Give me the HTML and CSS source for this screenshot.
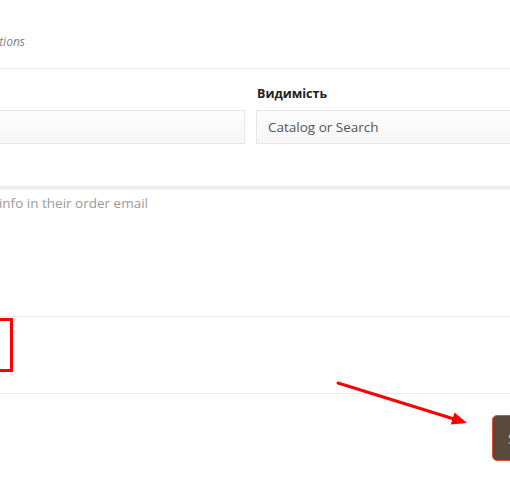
FILE: index.html
```html
<!DOCTYPE html>
<html lang="uk">
<head>
<meta charset="utf-8">
<title>Shipping method</title>
<link rel="stylesheet" href="styles.css">
</head>
<body>
<div class="page">
  <div class="head">
    <p class="note">Special instructions</p>
  </div>
  <div class="fields">
    <div class="field">
      <label class="label">Назва</label>
      <div class="input"></div>
    </div>
    <div class="field">
      <label class="label">Видимість</label>
      <div class="input">Catalog or Search</div>
    </div>
  </div>
  <div class="textarea">
    <p class="placeholder">Customers will see this info in their order email</p>
  </div>
  <div class="section">
    <div class="highlight"></div>
  </div>
  <div class="actions">
    <button class="btn">Save</button>
  </div>
</div>
<svg class="arrow" width="510" height="501" viewBox="0 0 510 501">
  <line x1="338" y1="383" x2="454" y2="419" stroke="#ff0000" stroke-width="3" stroke-linecap="round"/>
  <polygon points="467,423 454.5,412.6 450.8,424.6" fill="#ff0000"/>
</svg>
</body>
</html>
```

FILE: styles.css
```css
html, body {
  margin: 0;
  padding: 0;
  overflow: hidden;
  background: #fff;
}
body {
  font-family: "Open Sans", "Noto Sans", sans-serif;
  width: 510px;
  height: 501px;
  position: relative;
}
.page {
  margin-left: -300px;
  width: 910px;
}
.head {
  border-bottom: 1px solid #e8e8e8;
  box-sizing: border-box;
  height: 69px;
}
.note {
  margin: 0;
  padding-top: 33px;
  width: 325px;
  text-align: right;
  font-style: italic;
  font-size: 12px;
  line-height: 17px;
  color: #7d818c;
}
.fields {
  display: grid;
  grid-template-columns: 545px 1fr;
  column-gap: 11px;
  padding-top: 16px;
  height: 101px;
}
.field {
  display: flex;
  flex-direction: column;
}
.label {
  font-weight: 700;
  font-size: 12.5px;
  line-height: 18px;
  color: #222;
  margin-bottom: 7px;
  padding-left: 1px;
}
.input {
  height: 34px;
  box-sizing: border-box;
  border: 1px solid #e6e6e6;
  background: linear-gradient(#fcfcfc, #f6f6f6);
  font-size: 13.5px;
  line-height: 32px;
  padding-left: 11px;
  color: #555;
}
.textarea {
  border-top: 3px solid #ececec;
  box-shadow: inset 0 1px 2px #f2f2f2;
  border-bottom: 1px solid #ebebeb;
  padding-top: 4px;
  box-sizing: border-box;
  height: 131px;
}
.placeholder {
  margin: 0;
  width: 448px;
  text-align: right;
  font-size: 13.5px;
  line-height: 20px;
  color: #9a9a9a;
}
.section {
  height: 77px;
  box-sizing: border-box;
  border-bottom: 1px solid #ebebeb;
  padding-top: 1px;
}
.highlight {
  width: 313px;
  height: 54px;
  box-sizing: border-box;
  border: 3px solid #ff0000;
}
.actions {
  display: flex;
  justify-content: flex-end;
  padding-top: 21px;
}
.btn {
  width: 118px;
  height: 46px;
  box-sizing: border-box;
  border: 1px solid #e0512b;
  border-radius: 5px;
  background: #594a3b;
  color: #9ccbf2;
  font-family: "Open Sans", sans-serif;
  font-size: 14px;
  text-align: left;
  padding-left: 15px;
}
.arrow {
  position: absolute;
  left: 0;
  top: 0;
  pointer-events: none;
}
```
